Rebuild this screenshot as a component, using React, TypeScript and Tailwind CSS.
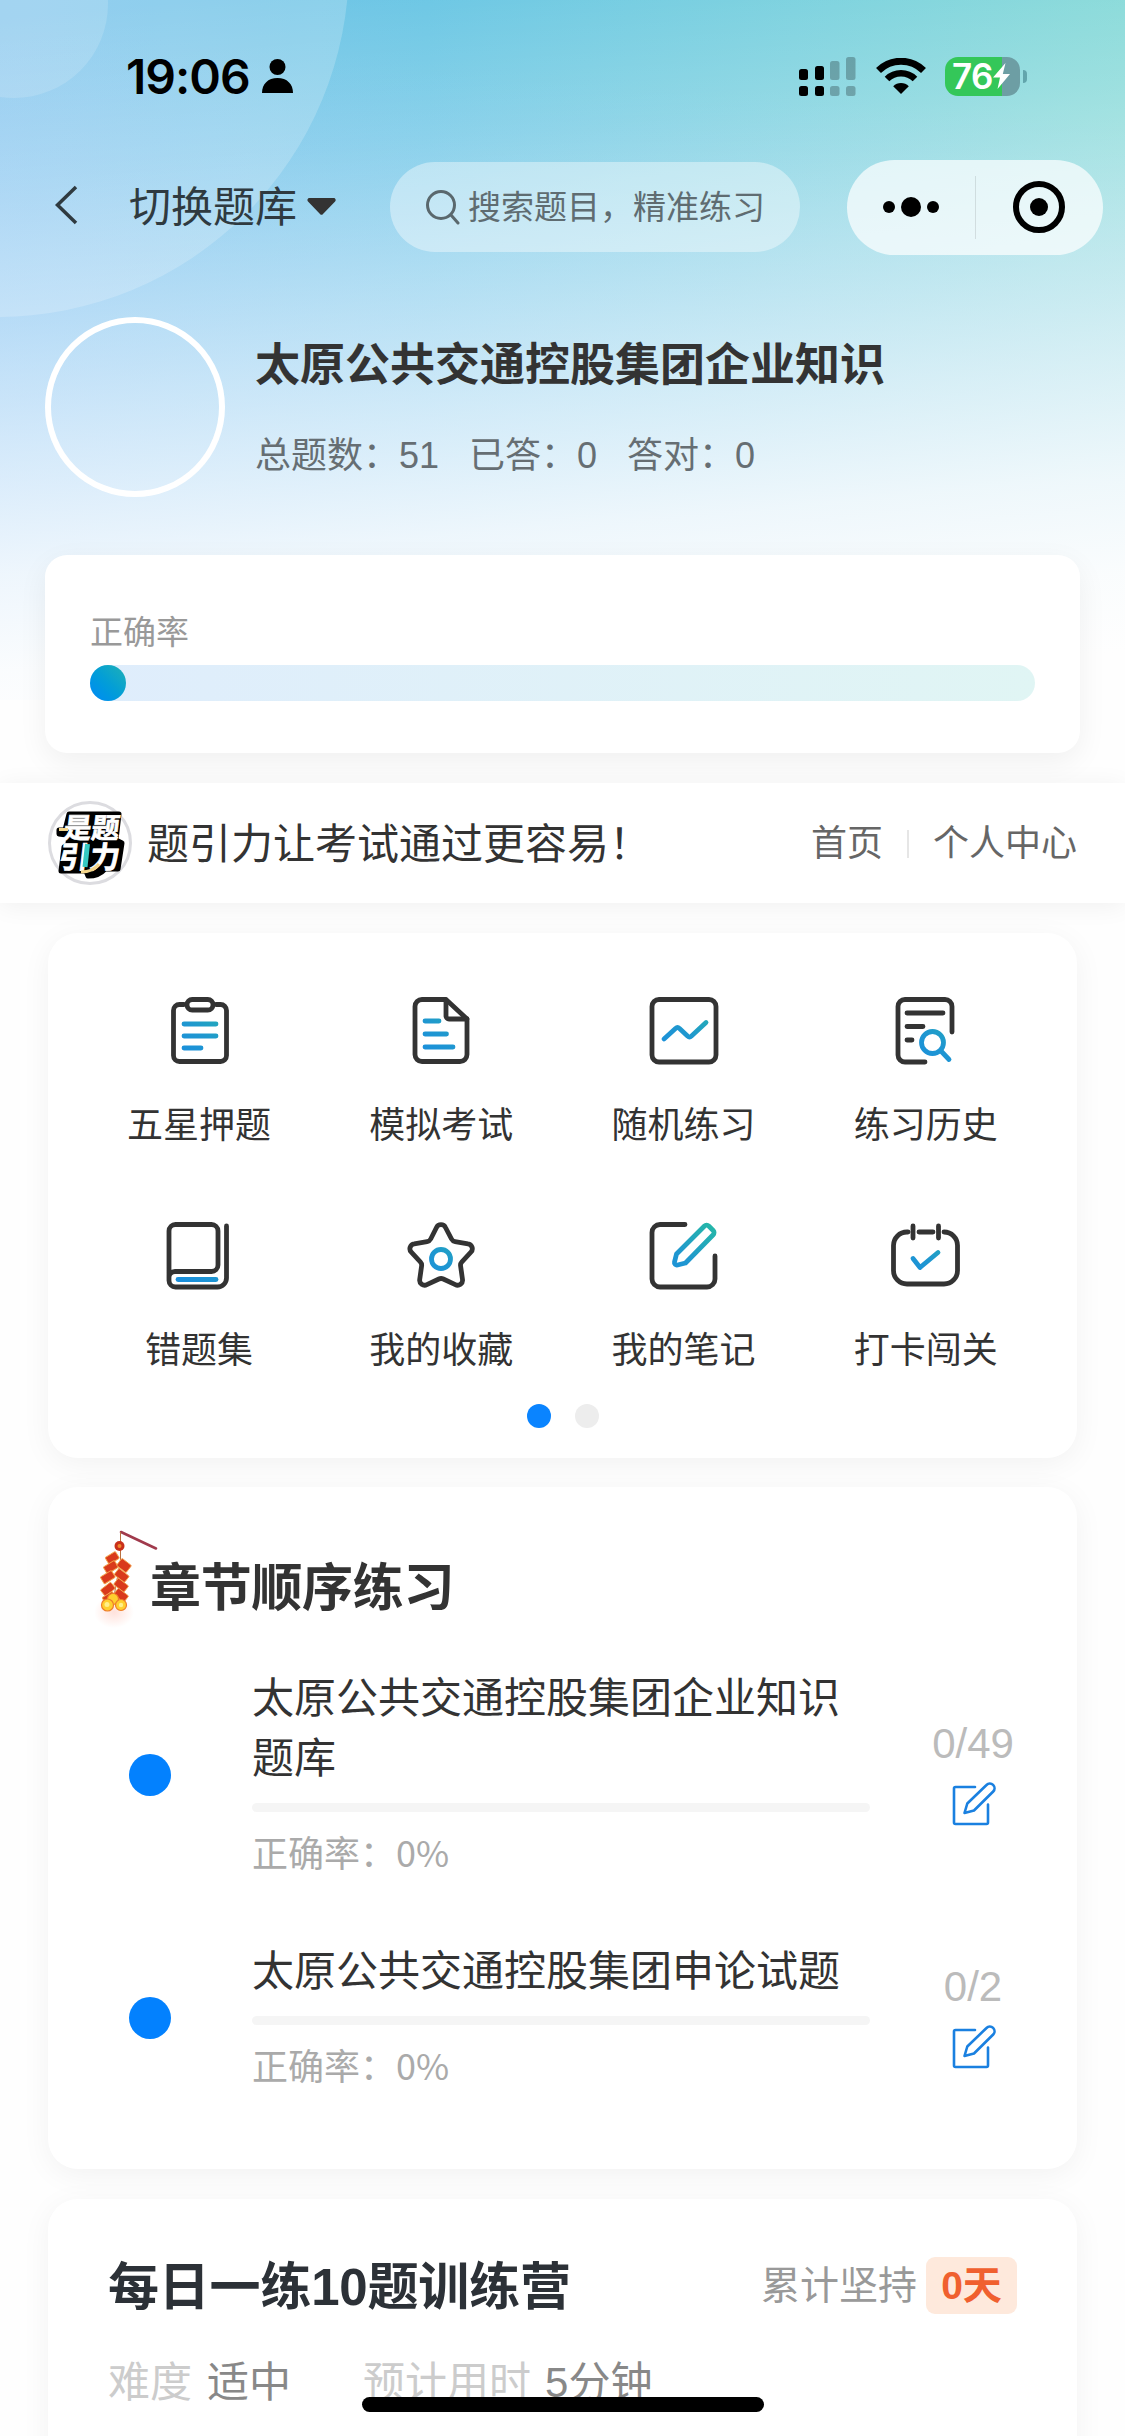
import React from 'react';

interface Feature {
  label: string;
  icon: React.ReactNode;
}

interface Chapter {
  id: number;
  title: string;
  rate: string;
  progress: string;
}

const INK = '#333333';
const ACCENT = 'url(#accent)';

const FEATURES: Feature[] = [
  {
    label: '五星押题',
    icon: (
      <>
        <path d="M21 9.500h-4.500a6 6 0 0 0-6 6v45a6 6 0 0 0 6 6h41a6 6 0 0 0 6-6v-45a6 6 0 0 0-6-6H53" stroke={INK} />
        <rect x="24" y="4.500" width="26" height="10.500" rx="5.250" stroke={INK} />
        <path d="M21 29h32M21 41h32M21 53h17" stroke={ACCENT} />
      </>
    ),
  },
  {
    label: '模拟考试',
    icon: (
      <>
        <path d="M41 4.500H17a7 7 0 0 0-7 7v48a7 7 0 0 0 7 7h38a7 7 0 0 0 7-7V24z" stroke={INK} />
        <path d="M41 5v16a3 3 0 0 0 3 3h18" stroke={INK} />
        <path d="M20 26h14M20 39h21.500M20 52h28" stroke={ACCENT} />
      </>
    ),
  },
  {
    label: '随机练习',
    icon: (
      <>
        <rect x="4" y="4.500" width="64" height="62.500" rx="7" stroke={INK} />
        <path d="M16 44l11.500-10.500a3 3 0 0 1 4 0l8 7.500a3 3 0 0 0 4 0L58 27.500" stroke={ACCENT} />
      </>
    ),
  },
  {
    label: '练习历史',
    icon: (
      <>
        <path d="M35 67H15a7 7 0 0 1-7-7V11.500a7 7 0 0 1 7-7h40a7 7 0 0 1 7 7V37" stroke={INK} />
        <path d="M17 18h36M17 31.500h16M17 45h5" stroke={INK} />
        <circle cx="42.500" cy="47.500" r="11" stroke={ACCENT} />
        <path d="M51 56l8 8.500" stroke={ACCENT} />
      </>
    ),
  },
  {
    label: '错题集',
    icon: (
      <>
        <path d="M6 58V11a6.500 6.500 0 0 1 6.500-6.500h36a6.500 6.500 0 0 1 6.500 6.500v34a6.500 6.500 0 0 1-6.500 6.500H12A6 6 0 0 0 6 58v2.500a6.500 6.500 0 0 0 6.500 6.500h42a9 9 0 0 0 9-9V6" stroke={INK} />
        <path d="M15 59.500h38" stroke={ACCENT} />
      </>
    ),
  },
  {
    label: '我的收藏',
    icon: (
      <>
        <path
          d="M31.500 7.500a5 5 0 0 1 9 0l6 11.500a5 5 0 0 0 3.600 2.600l12.900 2.200a5 5 0 0 1 2.900 8.400l-9 9.600a5 5 0 0 0-1.300 4.200l1.900 13.500a5 5 0 0 1-7.200 5.200l-12-5.700a5 5 0 0 0-4.400 0l-12 5.700a5 5 0 0 1-7.200-5.200l1.900-13.500a5 5 0 0 0-1.300-4.200l-9-9.600a5 5 0 0 1 2.900-8.400l12.900-2.200a5 5 0 0 0 3.600-2.600z"
          stroke={INK}
        />
        <circle cx="36" cy="39" r="9.500" stroke={ACCENT} />
      </>
    ),
  },
  {
    label: '我的笔记',
    icon: (
      <>
        <path d="M37 4.500H12a8 8 0 0 0-8 8V59a8 8 0 0 0 8 8h47a8 8 0 0 0 8-8V36" stroke={INK} />
        <path d="M28.500 34L56.500 6a3 3 0 0 1 4.200 0l4.500 4.500a3 3 0 0 1 0 4.200L37.500 43l-8 2a2.500 2.500 0 0 1-3-3z" stroke={ACCENT} />
      </>
    ),
  },
  {
    label: '打卡闯关',
    icon: (
      <>
        <path d="M18 12h-1A13.500 13.500 0 0 0 3.500 25.500v25A13.500 13.500 0 0 0 17 64h37a13.500 13.500 0 0 0 13.500-13.500v-25A13.500 13.500 0 0 0 54 12M29 12h14M23 6v12M48.500 6v12" stroke={INK} />
        <path d="M23 38.500l7 9 18-15" stroke={ACCENT} />
      </>
    ),
  },
];

const CHAPTERS: Chapter[] = [
  { id: 1, title: '太原公共交通控股集团企业知识题库', rate: '0%', progress: '0/49' },
  { id: 2, title: '太原公共交通控股集团申论试题', rate: '0%', progress: '0/2' },
];

const STATS = ['总题数：51', '已答：0', '答对：0'];

const StatusBar: React.FC = () => (
  <div className="flex h-[152px] items-center pl-[126px] pr-[98px]">
    <span className="mt-[2px] font-['Inter'] text-[48px] font-semibold leading-none tracking-[-1px] text-black">19:06</span>
    <svg className="ml-[12px] h-[34px] w-[31px]" viewBox="0 0 31 34" fill="#000">
      <circle cx="15.500" cy="8" r="8" />
      <path d="M0 34c0-9 6-15 15.500-15S31 25 31 34z" />
    </svg>
    <svg className="ml-auto h-[39px] w-[57px]" viewBox="0 0 57 39" fill="#000">
      <rect x="0" y="12" width="9" height="11" rx="2.500" />
      <rect x="16" y="9" width="9" height="14" rx="2.500" />
      <rect x="31" y="4" width="9.500" height="19" rx="2.500" opacity="0.250" />
      <rect x="47" y="0" width="9.500" height="23" rx="2.500" opacity="0.250" />
      <rect x="0" y="29" width="9" height="10" rx="2.500" />
      <rect x="16" y="29" width="9" height="10" rx="2.500" />
      <rect x="31" y="29" width="9.500" height="10" rx="2.500" opacity="0.250" />
      <rect x="47" y="29" width="9.500" height="10" rx="2.500" opacity="0.250" />
    </svg>
    <svg className="ml-[20px] h-[36px] w-[50px]" viewBox="0 0 50 36" fill="none">
      <path d="M2.500 12.500a32 32 0 0 1 45 0" stroke="#000" strokeWidth="7" />
      <path d="M11 21a20 20 0 0 1 28 0" stroke="#000" strokeWidth="6.500" />
      <path d="M17.200 28.200a11 11 0 0 1 15.600 0L25 36z" fill="#000" />
    </svg>
    <div className="ml-[19px] flex items-center gap-[3px]">
      <div className="flex h-[39px] w-[75px] items-center rounded-[13px] bg-linear-to-r from-[#34c759] from-76% to-[#6d9ea4] to-76% pl-[7px]">
        <span className="font-['Inter'] text-[35px] font-semibold leading-[39px] tracking-[-0.5px] text-white">76</span>
        <svg className="h-[26px] w-[17px]" viewBox="0 0 17 26" fill="#fff">
          <path d="M12.500 0L0 14.500h7L4.500 26 17 11h-7.200z" />
        </svg>
      </div>
      <div className="h-[13px] w-[4px] rounded-r-full bg-[#62a5ac]" />
    </div>
  </div>
);

const NavBar: React.FC = () => (
  <div className="flex h-[110px] items-center pl-[54px] pr-[22px]">
    <svg className="-mt-[4px] h-[40px] w-[24px]" viewBox="0 0 24 40" fill="none" stroke="#2f3a40" strokeWidth="3.500">
      <path d="M22 2L3.500 20 22 38" />
    </svg>
    <span className="ml-[51px] mt-[2px] text-[42px] leading-[60px] text-[#2f3a40]">切换题库</span>
    <svg className="-mt-[2px] ml-[10px] h-[17px] w-[29px]" viewBox="0 0 29 17" fill="#333">
      <path d="M2.500 0h24a2 2 0 0 1 1.600 3.400L16 16a2 2 0 0 1-3 0L1 3.400A2 2 0 0 1 2.500 0z" />
    </svg>
    <div className="ml-[54px] flex h-[90px] w-[410px] items-center rounded-full bg-white/40 pl-[36px]">
      <svg className="h-[36px] w-[34px]" viewBox="0 0 34 36" fill="none" stroke="#5a686d" strokeWidth="3">
        <circle cx="15" cy="16" r="13.500" />
        <path d="M25 26l7 8" strokeLinecap="round" />
      </svg>
      <span className="ml-[8px] mt-[2px] whitespace-nowrap text-[33px] leading-[48px] text-[#5f6c71]">搜索题目，精准练习</span>
    </div>
    <div className="ml-auto flex h-[95px] w-[256px] items-center rounded-full bg-white/70">
      <div className="flex flex-1 items-center justify-center gap-[6px]">
        <i className="size-[12px] rounded-full bg-black" />
        <i className="size-[20px] rounded-full bg-black" />
        <i className="size-[12px] rounded-full bg-black" />
      </div>
      <div className="h-[63px] w-px bg-black/10" />
      <div className="flex flex-1 items-center justify-center">
        <div className="flex size-[52px] items-center justify-center rounded-full border-[6px] border-black">
          <i className="size-[18px] rounded-full bg-black" />
        </div>
      </div>
    </div>
  </div>
);

const Logo: React.FC = () => (
  <svg className="size-[84px]" viewBox="0 0 84 84">
    <circle cx="42" cy="42" r="40.500" fill="#fff" stroke="#dcdce0" strokeWidth="3" />
    <path d="M21 13h50l-3 26 6 3-4 26H57q-6 7-17 7l-2-5H13l3-24 5-4-3-8-7-1v-4h6z" fill="#000" stroke="#000" strokeWidth="5" strokeLinejoin="round" />
    <g transform="skewX(-7)" fontFamily="Noto Sans CJK SC, sans-serif" fontWeight="700" fill="#fff" stroke="#fff" strokeWidth="0.700">
      <text x="19" y="37" fontSize="28" textLength="56">是题</text>
      <text x="18" y="67" fontSize="30" textLength="61">引力</text>
    </g>
    <path d="M11 28.500h9" stroke="#f3d58a" strokeWidth="3" />
    <path d="M39.500 43l-2.500 23" stroke="#35c9c3" strokeWidth="5" />
    <path d="M33 71q12 0 18-8" stroke="#f3d58a" strokeWidth="3" fill="none" />
  </svg>
);

const Firecracker: React.FC = () => (
  <svg className="h-[100px] w-[64px]" viewBox="0 0 64 100">
    <defs>
      <radialGradient id="glow">
        <stop offset="0" stopColor="#ff6a4a" stopOpacity="0.200" />
        <stop offset="1" stopColor="#ff6a4a" stopOpacity="0" />
      </radialGradient>
    </defs>
    <ellipse cx="19" cy="82" rx="20" ry="16" fill="url(#glow)" />
    <path d="M26 2l35 16.500" stroke="#a03a4c" strokeWidth="2.600" strokeLinecap="round" />
    <path d="M25.500 2v28L18 72" stroke="#b9703f" strokeWidth="1" fill="none" />
    <circle cx="24.500" cy="16" r="5" fill="#c9301a" />
    <circle cx="24.500" cy="16" r="2" fill="#f2892e" />
    <g fill="#d93a1c" stroke="#f3a24a" strokeWidth="0.900">
      <rect x="11" y="24" width="12" height="8" rx="1" transform="rotate(-32 17 27.500)" />
      <rect x="9" y="33" width="13" height="8" rx="1" transform="rotate(-32 16 36.500)" />
      <rect x="23" y="31" width="12" height="9" rx="1" transform="rotate(38 29 35.500)" />
      <rect x="6" y="43" width="13" height="8" rx="1" transform="rotate(-32 13 46.500)" />
      <rect x="20" y="41" width="13" height="8" rx="1" transform="rotate(38 26 45.500)" />
      <rect x="20" y="51" width="13" height="8" rx="1" transform="rotate(38 26 54.500)" />
      <rect x="6" y="55" width="13" height="8" rx="1" transform="rotate(-38 13 58.500)" />
      <rect x="20" y="61" width="13" height="8" rx="1" transform="rotate(38 26 64.500)" />
      <rect x="8" y="64" width="12" height="7" rx="1" transform="rotate(-32 14 67.500)" />
    </g>
    <g fill="#ffcf2e" stroke="#ee7d2a" strokeWidth="1.200">
      <circle cx="18" cy="69" r="5.500" />
      <circle cx="12.500" cy="75" r="6" />
      <circle cx="26" cy="75" r="5.500" />
    </g>
    <circle cx="12" cy="74.500" r="2.500" fill="#fff08a" />
    <circle cx="26" cy="75" r="2.200" fill="#fff08a" />
  </svg>
);

const EditIcon: React.FC = () => (
  <svg className="size-[44px]" viewBox="0 0 44 44" fill="none" stroke="#1a80e0" strokeWidth="2.600" strokeLinecap="round" strokeLinejoin="round">
    <path d="M23 5H3.500A1.500 1.500 0 0 0 2 6.500v34A1.500 1.500 0 0 0 3.500 42h31a1.500 1.500 0 0 0 1.500-1.500V22.500" />
    <path d="M12.500 31l2.800-9.500L34.500 3a4.600 4.600 0 0 1 6.700 6.500L22 28.500z" />
  </svg>
);

const App: React.FC = () => {
  return (
    <div className="relative flex h-[2436px] w-[1125px] flex-col overflow-hidden bg-[#fefefe] font-['Liberation_Sans','Noto_Sans_CJK_SC',sans-serif] text-[#333]">
      {/* header backdrop */}
      <div className="absolute inset-x-0 top-0 h-[700px] overflow-hidden bg-linear-to-r from-[#79c1ec] via-[#6ac6e4] via-38% to-[#7fd7d6]">
        <div className="absolute inset-0 bg-[linear-gradient(185deg,transparent_15%,rgba(125,185,250,0.55)_75%)]" />
        <div className="absolute -left-[355px] -top-[387px] size-[704px] rounded-full bg-white/20" />
        <div className="absolute -left-[80px] -top-[90px] size-[188px] rounded-full bg-white/15" />
        <div className="absolute inset-0 bg-[linear-gradient(175deg,transparent_2%,rgba(254,254,254,0.22)_22%,rgba(254,254,254,0.45)_39%,rgba(254,254,254,0.69)_57%,rgba(254,254,254,0.88)_72%,rgba(254,254,254,0.97)_84%,#fefefe_94%)]" />
      </div>

      <svg className="absolute size-0">
        <defs>
          <linearGradient id="accent" gradientUnits="userSpaceOnUse" x1="20" y1="60" x2="62" y2="6">
            <stop offset="0" stopColor="#1a8fdc" />
            <stop offset="0.400" stopColor="#1f97d0" />
            <stop offset="1" stopColor="#25b5aa" />
          </linearGradient>
        </defs>
      </svg>

      <header className="relative">
        <StatusBar />
        <NavBar />
        <div className="mt-[55px] flex items-center px-[45px]">
          <div className="size-[180px] rounded-full border-[6px] border-white" />
          <div className="ml-[30px] mt-[7px] flex flex-col">
            <h1 className="text-[45px] font-bold leading-[60px]">太原公共交通控股集团企业知识</h1>
            <div className="mt-[30px] flex gap-[30px] text-[36px] leading-[60px] text-[#666e73]">
              {STATS.map((item) => (
                <span key={item}>{item}</span>
              ))}
            </div>
          </div>
        </div>
      </header>

      <section className="relative mx-[45px] mt-[58px] h-[198px] shrink-0 rounded-[22px] bg-white px-[45px] pt-[53px] shadow-[0_9px_30px_rgba(0,0,0,0.06)]">
        <p className="text-[33px] leading-[50px] text-[#999]">正确率</p>
        <div className="mt-[7px] h-[36px] rounded-full bg-linear-to-r from-[#dfedfc] to-[#e0f5f4]">
          <div className="size-[36px] rounded-full bg-linear-to-tr from-[#0688f6] to-[#1fb0b4]" />
        </div>
      </section>

      <nav className="relative mt-[30px] flex h-[120px] shrink-0 items-center bg-white pl-[48px] pr-[48px] shadow-[0_3px_24px_rgba(0,0,0,0.06)]">
        <Logo />
        <span className="ml-[15px] mt-[3px] text-[42px] leading-[60px]">题引力让考试通过更容易！</span>
        <div className="ml-auto mt-[1px] flex items-center text-[36px] leading-[50px] text-[#666]">
          <a>首页</a>
          <i className="mx-[24px] h-[28px] w-[2px] bg-[#e6e6e6]" />
          <a>个人中心</a>
        </div>
      </nav>

      <section className="relative mx-[48px] mt-[30px] h-[525px] shrink-0 rounded-[30px] bg-white px-[30px] pt-[62px] shadow-[0_6px_30px_rgba(0,0,0,0.05)]">
        <div className="grid grid-cols-4">
          {FEATURES.map(({ label, icon }) => (
            <div key={label} className="flex h-[225px] flex-col items-center">
              <svg className="size-[72px]" viewBox="0 0 72 72" fill="none" strokeWidth="4.800" strokeLinecap="round" strokeLinejoin="round">
                {icon}
              </svg>
              <span className="mt-[34px] text-[36px] leading-[50px]">{label}</span>
            </div>
          ))}
        </div>
        <div className="-mt-[41px] flex justify-center gap-[24px]">
          <i className="size-[24px] rounded-full bg-[#0a84ff]" />
          <i className="size-[24px] rounded-full bg-[#ededed]" />
        </div>
      </section>

      <section className="relative mx-[48px] mt-[29px] h-[682px] shrink-0 rounded-[30px] bg-white shadow-[0_6px_30px_rgba(0,0,0,0.05)]">
        <div className="flex h-[182px] pl-[47px] pt-[43px]">
          <Firecracker />
          <h2 className="-ml-[9px] mt-[29px] text-[51px] font-bold leading-[60px] tracking-[-0.3px]">章节顺序练习</h2>
        </div>
        <div className="flex flex-col gap-[60px]">
          {CHAPTERS.map((chapter) => (
            <div key={chapter.id} className="flex items-center pl-[81px]">
              <i className="-mt-[2px] size-[42px] shrink-0 rounded-full bg-[#0381fe]" />
              <div className="ml-[81px] w-[618px]">
                <h3 className="text-[42px] leading-[60px]">{chapter.title}</h3>
                <div className="mt-[14px] h-[9px] rounded-full bg-[#f5f5f5]" />
                <p className="mb-[4px] mt-[12px] font-['Noto_Sans_CJK_SC'] text-[36px] leading-[54px] text-[#aaa]">正确率：{chapter.rate}</p>
              </div>
              <div className="-mt-[3px] ml-[43px] flex w-[120px] flex-col items-center">
                <span className="text-[42px] leading-[60px] text-[#bbb]">{chapter.progress}</span>
                <div className="flex h-[60px] items-center pl-[2px]">
                  <EditIcon />
                </div>
              </div>
            </div>
          ))}
        </div>
      </section>

      <section className="relative mx-[48px] mt-[30px] h-[400px] shrink-0 rounded-[30px] bg-white px-[60px] pt-[56px] shadow-[0_6px_30px_rgba(0,0,0,0.05)]">
        <div className="flex h-[60px] items-center">
          <h2 className="mt-[5px] text-[51px] font-bold leading-[60px] tracking-[-0.2px] text-[#2c3137]">每日一练10题训练营</h2>
          <span className="ml-auto text-[39px] leading-[57px] text-[#999]">累计坚持</span>
          <span className="ml-[9px] flex h-[57px] w-[91px] items-center justify-center rounded-[9px] bg-[#fee9dc] text-[39px] font-bold leading-[57px] text-[#f0602f]">0天</span>
        </div>
        <div className="mt-[38px] flex text-[42px] leading-[60px]">
          <span className="text-[#ccc]">难度</span>
          <span className="ml-[15px] text-[#888]">适中</span>
          <span className="ml-[72px] text-[#ccc]">预计用时</span>
          <span className="ml-[14px] text-[#888]">5分钟</span>
        </div>
      </section>

      {/* home indicator */}
      <div className="absolute bottom-[24px] left-[362px] h-[15px] w-[402px] rounded-full bg-black" />
    </div>
  );
};

export default App;
